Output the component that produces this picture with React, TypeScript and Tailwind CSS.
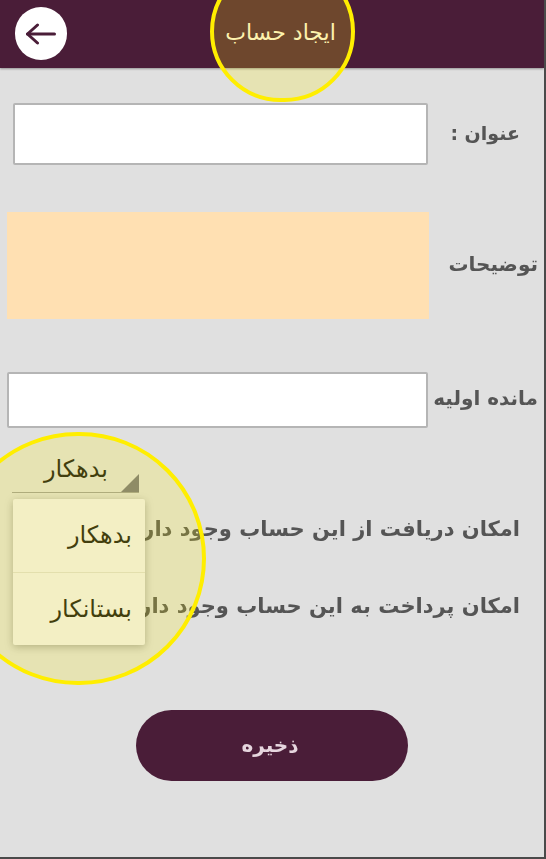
const FONT = "font-['DejaVu_Sans',sans-serif]";

export default function App() {
  return (
    <div
      dir="ltr"
      className={`relative w-[546px] h-[859px] overflow-hidden bg-[#e0e0e0] border-r-2 border-b-2 border-[#4a4a4a] ${FONT}`}
    >
      {/* Toolbar */}
      <header className="relative h-[68px] bg-[#4a1d38] flex items-center justify-center shadow-[0_1px_2px_rgba(0,0,0,0.35)]">
        <button
          type="button"
          className="absolute left-[15px] top-[7px] w-[52px] h-[53px] rounded-full bg-white flex items-center justify-center"
        >
          <svg width="30" height="22" viewBox="0 0 30 22" fill="none" stroke="#4a1d38" strokeWidth="3" strokeLinecap="round" strokeLinejoin="round">
            <path d="M1.5 11H28.5" />
            <path d="M11.5 2L1.5 11L11.5 20" />
          </svg>
        </button>
        <h1 dir="rtl" className="text-[#fdf3d8] text-[22px] leading-none -mt-[3px] ml-[17px]">
          ایجاد حساب
        </h1>
      </header>

      {/* Form */}
      <div className="flex flex-col">
        <div className="mt-[35px] h-[62px] flex items-center pl-[13px] pr-[24px]">
          <div className="w-[415px] h-full bg-white border-2 border-[#b5b5b5] rounded-[2px]" />
          <label dir="rtl" className="ml-auto -mt-[2px] text-[#555] text-[19px] font-bold blur-[0.4px]">
            عنوان :
          </label>
        </div>

        <div className="mt-[47px] h-[107px] flex items-center pl-[7px] pr-[6px]">
          <div className="w-[422px] h-full bg-[#ffe0b2]" />
          <label dir="rtl" className="ml-auto -mt-[4px] text-[#555] text-[20px] font-bold blur-[0.4px]">
            توضیحات
          </label>
        </div>

        <div className="mt-[53px] h-[56px] flex items-center pl-[7px] pr-[6px]">
          <div className="w-[421px] h-full bg-white border-2 border-[#b5b5b5] rounded-[2px]" />
          <label dir="rtl" className="ml-auto -mt-[4px] text-[#555] text-[20px] font-bold blur-[0.4px] whitespace-nowrap">
            مانده اولیه
          </label>
        </div>

        {/* Spinner */}
        <div className="mt-[27px] ml-[12px] w-[127px] h-[38px] relative border-b border-[#9c9c9c]">
          <span dir="rtl" className="absolute right-[31px] -top-[1px] text-[#111] text-[24px] leading-[30px]">
            بدهکار
          </span>
          <svg className="absolute right-0 bottom-0" width="18" height="18" viewBox="0 0 18 18">
            <polygon points="18,0 18,18 0,18" fill="#737380" />
          </svg>
        </div>

        <p dir="rtl" className="mt-[18px] pr-[24px] h-[36px] text-[#555] text-[21px] leading-[36px] font-bold blur-[0.4px] whitespace-nowrap">
          امکان دریافت از این حساب وجود دارد
        </p>
        <p dir="rtl" className="mt-[41px] pr-[24px] h-[36px] text-[#555] text-[21px] leading-[36px] font-bold blur-[0.4px] whitespace-nowrap">
          امکان پرداخت به این حساب وجود دارد
        </p>

        <button
          type="button"
          className="mt-[86px] ml-[136px] w-[272px] h-[71px] rounded-full bg-[#4a1d38] text-[#e6d6de] text-[20px] font-bold blur-[0.3px] pb-[2px] pr-[4px]"
        >
          ذخیره
        </button>
      </div>

      {/* Dropdown menu */}
      <div className="absolute left-[13px] top-[499px] w-[132px] h-[146px] bg-[#f0eff5] rounded-[2px] shadow-[0_2px_8px_rgba(0,0,0,0.28)] flex flex-col">
        <div dir="rtl" className="h-[74px] border-b border-[#dcdbd8] flex items-center pr-[13px] pb-[2px] text-[#111] text-[24px]">
          بدهکار
        </div>
        <div dir="rtl" className="flex-1 flex items-center pr-[13px] text-[#111] text-[24px] whitespace-nowrap">
          بستانکار
        </div>
      </div>

      {/* Yellow highlight circles */}
      <div className="absolute left-[210px] top-[-39px] w-[145px] h-[141px] rounded-full border-4 border-[#ffee00] bg-[#ffee00]/20 pointer-events-none" />
      <div className="absolute left-[-49px] top-[432px] w-[255px] h-[253px] rounded-full border-4 border-[#ffee00] bg-[#ffee00]/20 pointer-events-none" />
    </div>
  );
}
